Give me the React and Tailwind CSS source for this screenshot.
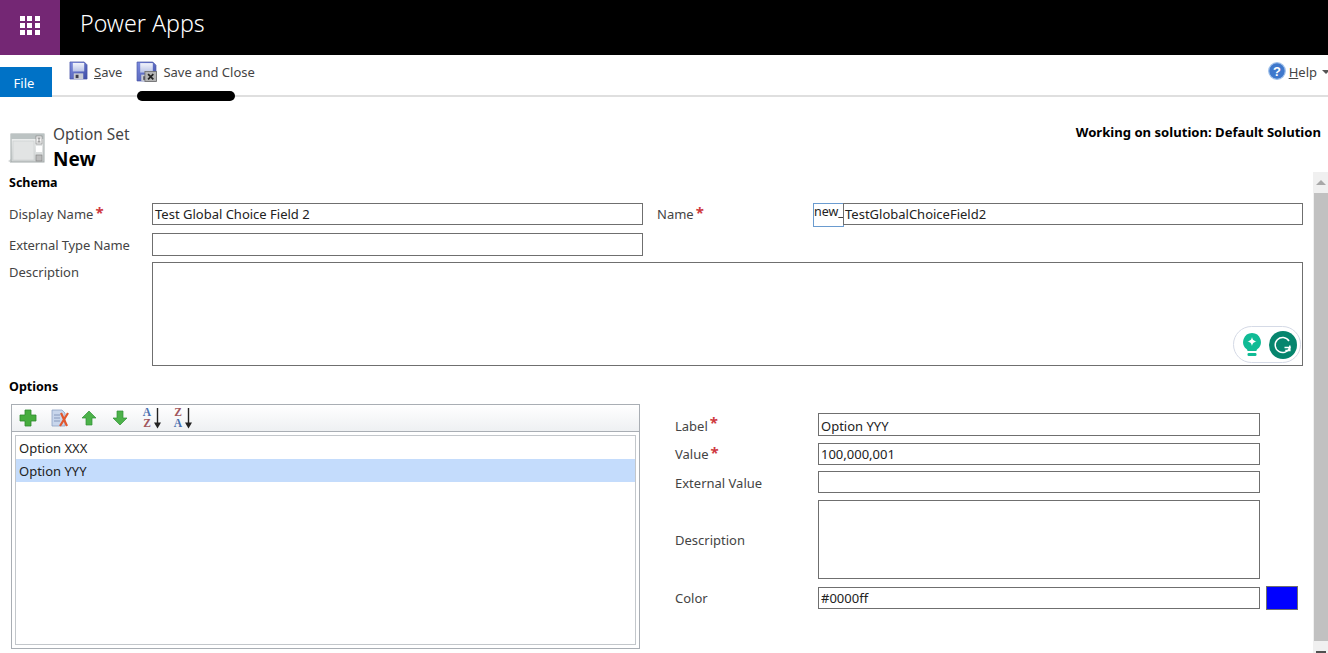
const font = { fontFamily: '"Noto Sans", "Open Sans", sans-serif' };

function Floppy({ close, id }) {
  return (
    <svg width={close ? 21 : 19} height={close ? 21 : 19} viewBox="0 0 20 20" className="shrink-0">
      <defs>
        <linearGradient id={id} x1="0" y1="0" x2="1" y2="1">
          <stop offset="0" stopColor="#7d8ce0" />
          <stop offset="1" stopColor="#3f4ea6" />
        </linearGradient>
        <linearGradient id={id + "l"} x1="0" y1="0" x2="0" y2="1">
          <stop offset="0" stopColor="#f2f4fb" />
          <stop offset="1" stopColor="#b9c3e6" />
        </linearGradient>
      </defs>
      <path d="M1 1h15l3 3v15H1z" fill={"url(#" + id + ")"} stroke="#4452a5" strokeWidth="0.7" />
      <rect x="4" y="2" width="12" height="9" fill={"url(#" + id + "l)"} />
      <rect x="5" y="13" width="10" height="6" fill="#c9ccd4" />
      <rect x="7" y="14.500" width="3" height="3.500" fill="#3c3c4c" />
      {close && <rect x="8.500" y="10" width="11" height="9.500" fill="#b4b4b4" stroke="#6e6e6e" strokeWidth="0.8" />}
      {close && <path d="M11.500 12.500l5 5M16.500 12.500l-5 5" stroke="#222" strokeWidth="1.600" />}
    </svg>
  );
}

function Star() {
  return <span className="text-[#cf3a42] text-[15px] font-bold leading-none relative top-[-3px] ml-[2px]">*</span>;
}

function Field({ className = "" }) {
  return <div className={"border border-[#6f6f6f] bg-white " + className} />;
}

function TextField({ value, className = "" }) {
  return (
    <div className={"border border-[#6f6f6f] bg-white pt-[2px] text-[13px] text-[#222] flex items-center " + className}>
      {value}
    </div>
  );
}

function Launcher() {
  return (
    <div className="grid grid-cols-3 gap-[2px] w-[20px]">
      {[0, 1, 2, 3, 4, 5, 6, 7, 8].map((i) => (
        <span key={i} className="w-[5px] h-[5px] bg-white" />
      ))}
    </div>
  );
}

function SortIcon({ top, bottom, topClass, bottomClass }) {
  return (
    <div className="flex items-center w-[21px] h-[22px]">
      <div className="flex flex-col w-[12px] items-center text-[11.500px] leading-[11px] font-bold" style={{ fontFamily: '"Liberation Serif", serif' }}>
        <span className={topClass}>{top}</span>
        <span className={bottomClass}>{bottom}</span>
      </div>
      <svg width="9" height="21" viewBox="0 0 9 21" className="shrink-0">
        <path d="M4.500 0v16" stroke="#222" strokeWidth="1.400" />
        <path d="M1 14.500h7l-3.500 6z" fill="#222" />
      </svg>
    </div>
  );
}

function OptionToolbar() {
  return (
    <div className="h-[27px] border-b border-[#a9aeb4] bg-gradient-to-b from-white to-[#eef0f2] flex items-center pl-[7px]">
      <svg width="18" height="18" viewBox="0 0 18 18" className="mr-[14px]">
        <path d="M6 1h6v5h5v6h-5v5H6v-5H1V6h5z" fill="#46ad3e" stroke="#2f8a2e" strokeWidth="0.800" />
      </svg>
      <svg width="19" height="19" viewBox="0 0 19 19" className="mr-[11px]">
        <path d="M1 1h10l3 3v13H1z" fill="#c8d6ec" stroke="#8ea2c4" strokeWidth="0.800" />
        <path d="M3 6h6M3 9h6M3 12h6" stroke="#7f93b8" strokeWidth="0.900" />
        <path d="M10 4l6 13M17 4L9 17" stroke="#e2582e" strokeWidth="2.200" />
      </svg>
      <svg width="16" height="16" viewBox="0 0 16 16" className="mr-[15px]">
        <path d="M8 1l7 7h-4v7H5V8H1z" fill="#4cb24a" stroke="#2f8f35" strokeWidth="0.700" />
      </svg>
      <svg width="16" height="16" viewBox="0 0 16 16" className="mr-[13px]">
        <path d="M8 15l7-7h-4V1H5v7H1z" fill="#4cb24a" stroke="#2f8f35" strokeWidth="0.700" />
      </svg>
      <span className="mr-[10px] flex"><SortIcon top="A" bottom="Z" topClass="text-[#4a70b0]" bottomClass="text-[#a0565c]" /></span>
      <SortIcon top="Z" bottom="A" topClass="text-[#a0565c]" bottomClass="text-[#4a70b0]" />
    </div>
  );
}

function Grammarly() {
  return (
    <div className="absolute right-[1px] bottom-[2px] w-[68px] h-[37px] rounded-full border border-[#d5dae6] bg-white flex items-center pl-[8px] gap-[7px]">
      <svg width="20" height="26" viewBox="0 0 20 26">
        <path d="M10 1a9 9 0 0 1 5.500 16c-.8.7-1 1.300-1 2h-9c0-.7-.2-1.300-1-2A9 9 0 0 1 10 1z" fill="#10bb95" />
        <path d="M10 5c.7 2.800 1.400 3.500 4.500 4.500-3.100 1-3.800 1.700-4.500 4.500-.7-2.800-1.400-3.500-4.500-4.500 3.100-1 3.800-1.700 4.500-4.500z" fill="#fff" />
        <rect x="5.500" y="21" width="9" height="3" rx="1.200" fill="#10bb95" />
      </svg>
      <svg width="28" height="28" viewBox="0 0 28 28">
        <circle cx="14" cy="14" r="14" fill="#06856d" />
        <path d="M20 10a7.500 7.500 0 1 0 .8 6.500h-5.300" fill="none" stroke="#fff" strokeWidth="1.500" />
        <path d="M20.800 14.500v5h-4.500" fill="none" stroke="#fff" strokeWidth="1.500" />
      </svg>
    </div>
  );
}

function RightRow({ label, star, className = "", children }) {
  return (
    <div className={"flex items-center " + className}>
      <div className="w-[143px] h-[22px] pt-[2px] text-[13px] text-[#444] flex items-center">
        {label}
        {star && <Star />}
      </div>
      {children}
    </div>
  );
}

export default function App() {
  return (
    <div className="w-[1328px] h-[653px] overflow-hidden bg-white flex flex-col relative" style={font}>
      <header className="h-[55px] bg-black flex items-stretch shrink-0">
        <div className="w-[60px] bg-[#742774] flex items-center justify-center pb-[4px]">
          <Launcher />
        </div>
        <div className="pl-[20px] text-white text-[23.200px] font-light flex items-center pb-[9px]">Power Apps</div>
      </header>

      <div className="h-[42px] shrink-0 border-b-2 border-[#dfdfdf] flex relative">
        <div className="w-[52px] h-[30px] mt-[12px] pt-[4px] pr-[4px] bg-[#0072c6] text-white text-[13px] flex items-center justify-center">File</div>
        <div className="flex items-start pt-[6px] pl-[17px] text-[13px] text-[#444]">
          <Floppy id="a" />
          <span className="ml-[6px] mt-[2px]"><u>S</u>ave</span>
          <span className="ml-[14px] flex"><Floppy close id="b" /></span>
          <span className="ml-[6px] mt-[2px]">Save and Close</span>
        </div>
        <div className="flex-1" />
        <div className="flex items-start pt-[6px] text-[13px] text-[#444]">
          <svg width="18" height="18" viewBox="0 0 18 18" className="mt-[1px]">
            <circle cx="9" cy="9" r="8.300" fill="#3f78cc" stroke="#9fc0ea" strokeWidth="1.200" />
            <text x="9" y="13.500" textAnchor="middle" fontSize="13" fontWeight="700" fontFamily="Liberation Sans" fill="#fff">?</text>
          </svg>
          <span className="ml-[3px] mt-[2px]"><u>H</u>elp</span>
          <span className="ml-[5px] mr-[-2px] mt-[9px] w-0 h-0 border-x-[4px] border-x-transparent border-t-[4px] border-t-[#555]" />
        </div>
        <span className="absolute left-[137px] top-[36px] w-[98px] h-[10px] rounded-full bg-black" />
      </div>

      <div className="h-[75px] shrink-0 flex pl-[8px] pt-[28px] relative">
        <svg width="38" height="32" viewBox="0 0 38 32" className="mt-[8px] shrink-0">
          <defs>
            <linearGradient id="t" x1="0" y1="0" x2="0" y2="1">
              <stop offset="0" stopColor="#f2f3f3" />
              <stop offset="1" stopColor="#cfd3d3" />
            </linearGradient>
          </defs>
          <path d="M0 28l3-2v4z" fill="#d5d8d8" />
          <rect x="3" y="1" width="33" height="28" fill="url(#t)" stroke="#a2a9a9" />
          <rect x="3" y="1" width="33" height="5" fill="#bcc3c3" />
          <rect x="5" y="8" width="21" height="19" fill="#e2e4e4" stroke="#c4c8c8" strokeWidth="0.500" />
          <rect x="28" y="3" width="6" height="8" fill="#f4f4f4" stroke="#7d7d7d" strokeWidth="0.600" />
          <path d="M29.500 5h3M31 5v4M29.500 9h3" stroke="#555" strokeWidth="0.600" />
          <rect x="28" y="13" width="6" height="6" fill="#fff" />
          <rect x="28" y="22" width="6" height="6" fill="#bbb" stroke="#7d7d7d" strokeWidth="0.600" />
        </svg>
        <div className="ml-[7px] flex flex-col">
          <span className="text-[15.400px] leading-[20px] text-[#444]">Option Set</span>
          <span className="text-[19px] leading-[28px] font-bold text-black">New</span>
        </div>
        <div className="flex-1" />
        <div className="text-[13.100px] font-bold text-black pr-[7px] leading-[18px] mt-[-2px]">Working on solution: Default Solution</div>
      </div>

      <div className="flex-1 flex min-h-0">
        <main className="flex-1 min-w-0 pl-[9px]">
          <div className="text-[12.500px] font-bold text-black h-[31px] pt-[1px] leading-[20px]">Schema</div>

          <div className="flex items-start h-[30px] text-[13px] text-[#444]">
            <div className="w-[143px] h-[22px] pt-[2px] flex items-center">Display Name<Star /></div>
            <TextField value={<span className="pl-[2px]">Test Global Choice Field 2</span>} className="w-[491px] h-[22px]" />
            <div className="w-[156px] h-[22px] pt-[2px] ml-[14px] flex items-center">Name<Star /></div>
            <div className="w-[31px] h-[24px] border border-[#6a9bcf] text-[12.500px] text-[#222] leading-[16px]">new_</div>
            <TextField value={<span className="pl-[1px]">TestGlobalChoiceField2</span>} className="w-[460px] h-[22px] ml-[-1px]" />
          </div>

          <div className="flex items-center h-[23px] text-[13px] text-[#444] mb-[6px]">
            <div className="w-[143px] pt-[2px] tracking-[-0.1px]">External Type Name</div>
            <Field className="w-[491px] h-[23px]" />
          </div>

          <div className="flex items-start h-[104px] text-[13px] text-[#444]">
            <div className="w-[143px] pt-[1px]">Description</div>
            <div className="relative w-[1151px] h-[104px] border border-[#6f6f6f]">
              <Grammarly />
            </div>
          </div>

          <div className="text-[12.500px] font-bold text-black h-[38px] pt-[12px] leading-[18px]">Options</div>

          <div className="flex items-start">
            <div className="w-[629px] h-[245px] ml-[2px] border border-[#a9aeb4] flex flex-col">
              <OptionToolbar />
              <div className="flex-1 mx-[3px] mt-[3px] mb-[3px] border border-[#c3c7cb] pt-[1px] text-[13px] text-[#222]">
                <div className="h-[22px] pl-[3px] pt-[2px] flex items-center">Option XXX</div>
                <div className="h-[23px] pl-[3px] pt-[2px] flex items-center bg-[#c4dcfc]">Option YYY</div>
              </div>
            </div>

            <div className="ml-[35px] w-[623px] pt-[9px] flex flex-col">
              <RightRow label={<span className="pt-[2px]">Label</span>} star className="mb-[7px]">
                <TextField value={<span className="pl-[2px] pt-[2px]">Option YYY</span>} className="w-[442px] h-[23px]" />
              </RightRow>
              <RightRow label="Value" star className="mb-[6px]">
                <TextField value={<span className="pl-[2px]">100,000,001</span>} className="w-[442px] h-[22px]" />
              </RightRow>
              <RightRow label={<span className="pt-[2px]">External Value</span>} className="mb-[7px]">
                <Field className="w-[442px] h-[22px]" />
              </RightRow>
              <RightRow label="Description" className="mb-[7px]">
                <Field className="w-[442px] h-[79px]" />
              </RightRow>
              <RightRow label="Color">
                <TextField value={<span className="pl-[2px]">#0000ff</span>} className="w-[442px] h-[22px]" />
                <div className="ml-[6px] w-[32px] h-[24px] bg-[#0000ff] border border-[#6f6f6f]" />
              </RightRow>
            </div>
          </div>
        </main>

        <aside className="w-[15px] shrink-0 bg-[#f0f0f0] flex flex-col">
          <div className="h-[21px] flex items-center justify-center">
            <span className="w-0 h-0 border-x-[5px] border-x-transparent border-b-[5px] border-b-[#a8a8a8]" />
          </div>
          <div className="flex-1 ml-[1px] bg-[#c1c1c1]" />
          <div className="h-[12px] flex items-start justify-center pt-[10px]">
            <span className="w-[10px] h-[2px] bg-[#505050]" />
          </div>
        </aside>
      </div>
    </div>
  );
}
